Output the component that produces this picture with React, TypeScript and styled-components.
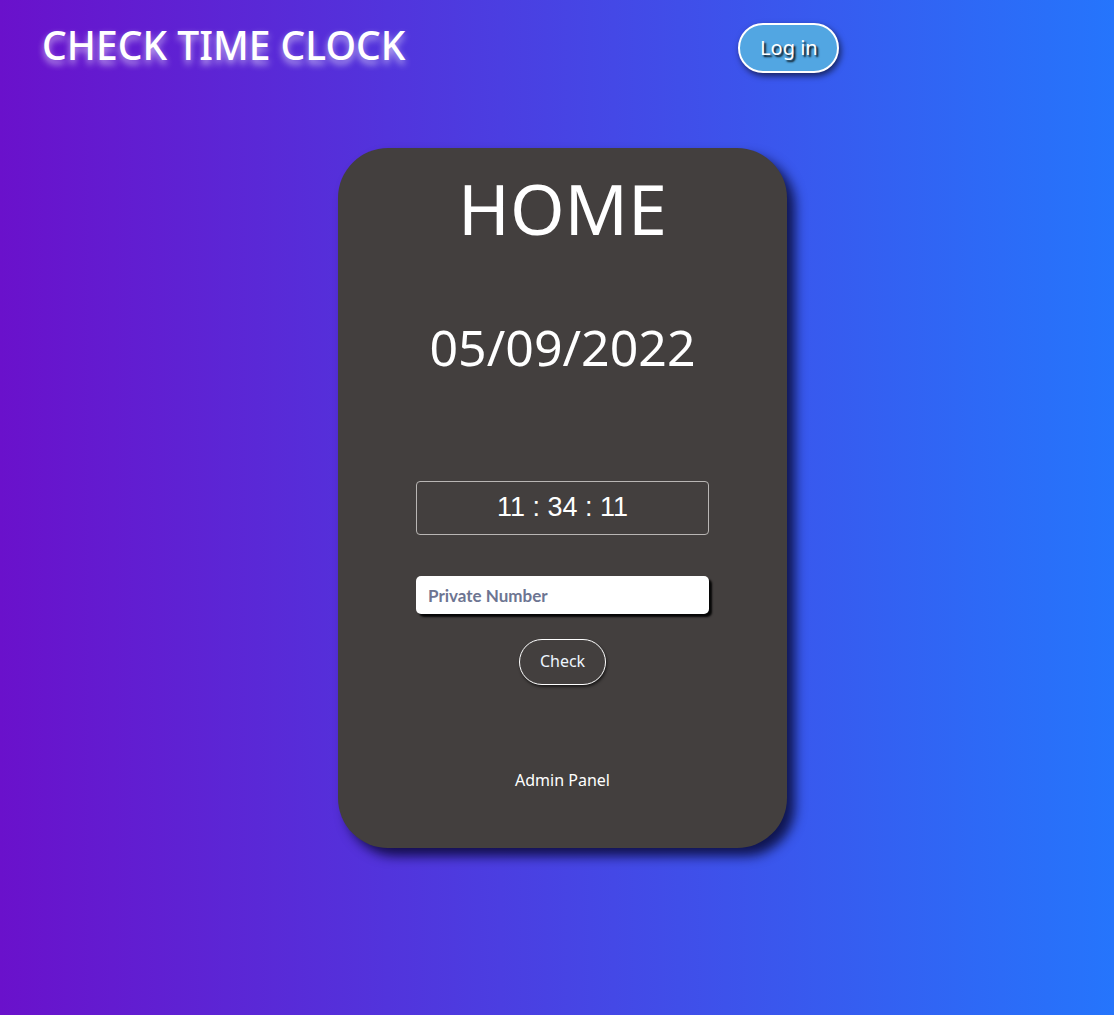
import React from "react";
import styled, { createGlobalStyle } from "styled-components";

const GlobalStyle = createGlobalStyle`
  html, body { margin: 0; padding: 0; }
  body {
    font-family: "Noto Sans", "Open Sans", sans-serif;
    background: linear-gradient(to right, #6a11cb 0%, #2575fc 100%);
    min-height: 1015px;
  }
`;

const Page = styled.div`
  min-height: 1015px;
  background: linear-gradient(to right, #6a11cb 0%, #2575fc 100%);
  display: flex;
  flex-direction: column;
  align-items: stretch;
`;

const Header = styled.header`
  display: flex;
  align-items: flex-start;
  padding: 20px 0 0 42px;
  height: 128px;
  box-sizing: border-box;
`;

const Title = styled.h1`
  margin: 0;
  font-family: "Noto Sans", sans-serif;
  font-weight: 500;
  font-size: 39px;
  line-height: 50px;
  color: #ffffff;
  text-shadow: 0 4px 7px rgba(255, 255, 255, 0.65);
  letter-spacing: 0;
`;

const LoginButton = styled.button`
  margin-left: 333px;
  margin-top: 3px;
  width: 101px;
  height: 50px;
  border-radius: 25px;
  border: 2px solid #ffffff;
  background: #52a6e2;
  color: #ffffff;
  font-family: "Noto Sans", sans-serif;
  font-size: 20px;
  text-shadow: 2px 2px 2px rgba(0, 0, 0, 0.95);
  box-shadow: 2px 3px 6px rgba(0, 0, 0, 0.6);
  cursor: pointer;
  padding: 0 0 2px;
`;

const Main = styled.main`
  display: flex;
  justify-content: center;
  padding-top: 20px;
  padding-left: 11px;
`;

const Card = styled.section`
  width: 449px;
  height: 700px;
  box-sizing: border-box;
  background: #433f3e;
  border-radius: 50px;
  box-shadow: 8px 8px 12px rgba(5, 5, 40, 0.8);
  display: flex;
  flex-direction: column;
  align-items: center;
  padding-top: 18px;
`;

const Heading = styled.h2`
  margin: 0;
  font-family: "Noto Sans", sans-serif;
  font-weight: 400;
  font-size: 70px;
  line-height: 84px;
  color: #ffffff;
`;

const DateText = styled.div`
  margin-top: 66px;
  font-family: "Noto Sans", sans-serif;
  font-size: 50px;
  line-height: 62px;
  color: #ffffff;
`;

const ClockBox = styled.div`
  margin-top: 103px;
  width: 293px;
  height: 54px;
  box-sizing: border-box;
  border: 1px solid #b9b6b4;
  border-radius: 4px;
  display: flex;
  align-items: center;
  justify-content: center;
  font-family: "Liberation Sans", Arial, sans-serif;
  font-size: 27px;
  color: #ffffff;
  padding-bottom: 2px;
`;

const Input = styled.input`
  margin-top: 41px;
  width: 293px;
  height: 38px;
  box-sizing: border-box;
  border: none;
  border-radius: 5px;
  background: #ffffff;
  box-shadow: 3px 3px 2px rgba(0, 0, 0, 0.9);
  padding: 0 12px;
  font-family: "Lato", sans-serif;
  font-weight: 700;
  font-size: 17px;
  outline: none;
  &::placeholder {
    color: #6d7592;
    opacity: 1;
  }
`;

const CheckButton = styled.button`
  margin-top: 25px;
  width: 87px;
  height: 46px;
  border-radius: 23px;
  border: 1px solid #ffffff;
  background: transparent;
  color: #eef6ff;
  font-family: "Noto Sans", sans-serif;
  font-size: 16px;
  box-shadow: 1px 2px 3px rgba(0, 0, 0, 0.6);
  cursor: pointer;
  padding: 0 0 2px;
`;

const AdminLink = styled.a`
  margin-top: 84px;
  font-family: "Noto Sans", sans-serif;
  font-size: 16px;
  color: #ffffff;
  text-decoration: none;
  cursor: pointer;
`;

export default function App() {
  return (
    <>
      <GlobalStyle />
      <Page>
        <Header>
          <Title>CHECK TIME CLOCK</Title>
          <LoginButton>Log in</LoginButton>
        </Header>
        <Main>
          <Card>
            <Heading>HOME</Heading>
            <DateText>05/09/2022</DateText>
            <ClockBox>11 : 34 : 11</ClockBox>
            <Input placeholder="Private Number" />
            <CheckButton>Check</CheckButton>
            <AdminLink>Admin Panel</AdminLink>
          </Card>
        </Main>
      </Page>
    </>
  );
}
